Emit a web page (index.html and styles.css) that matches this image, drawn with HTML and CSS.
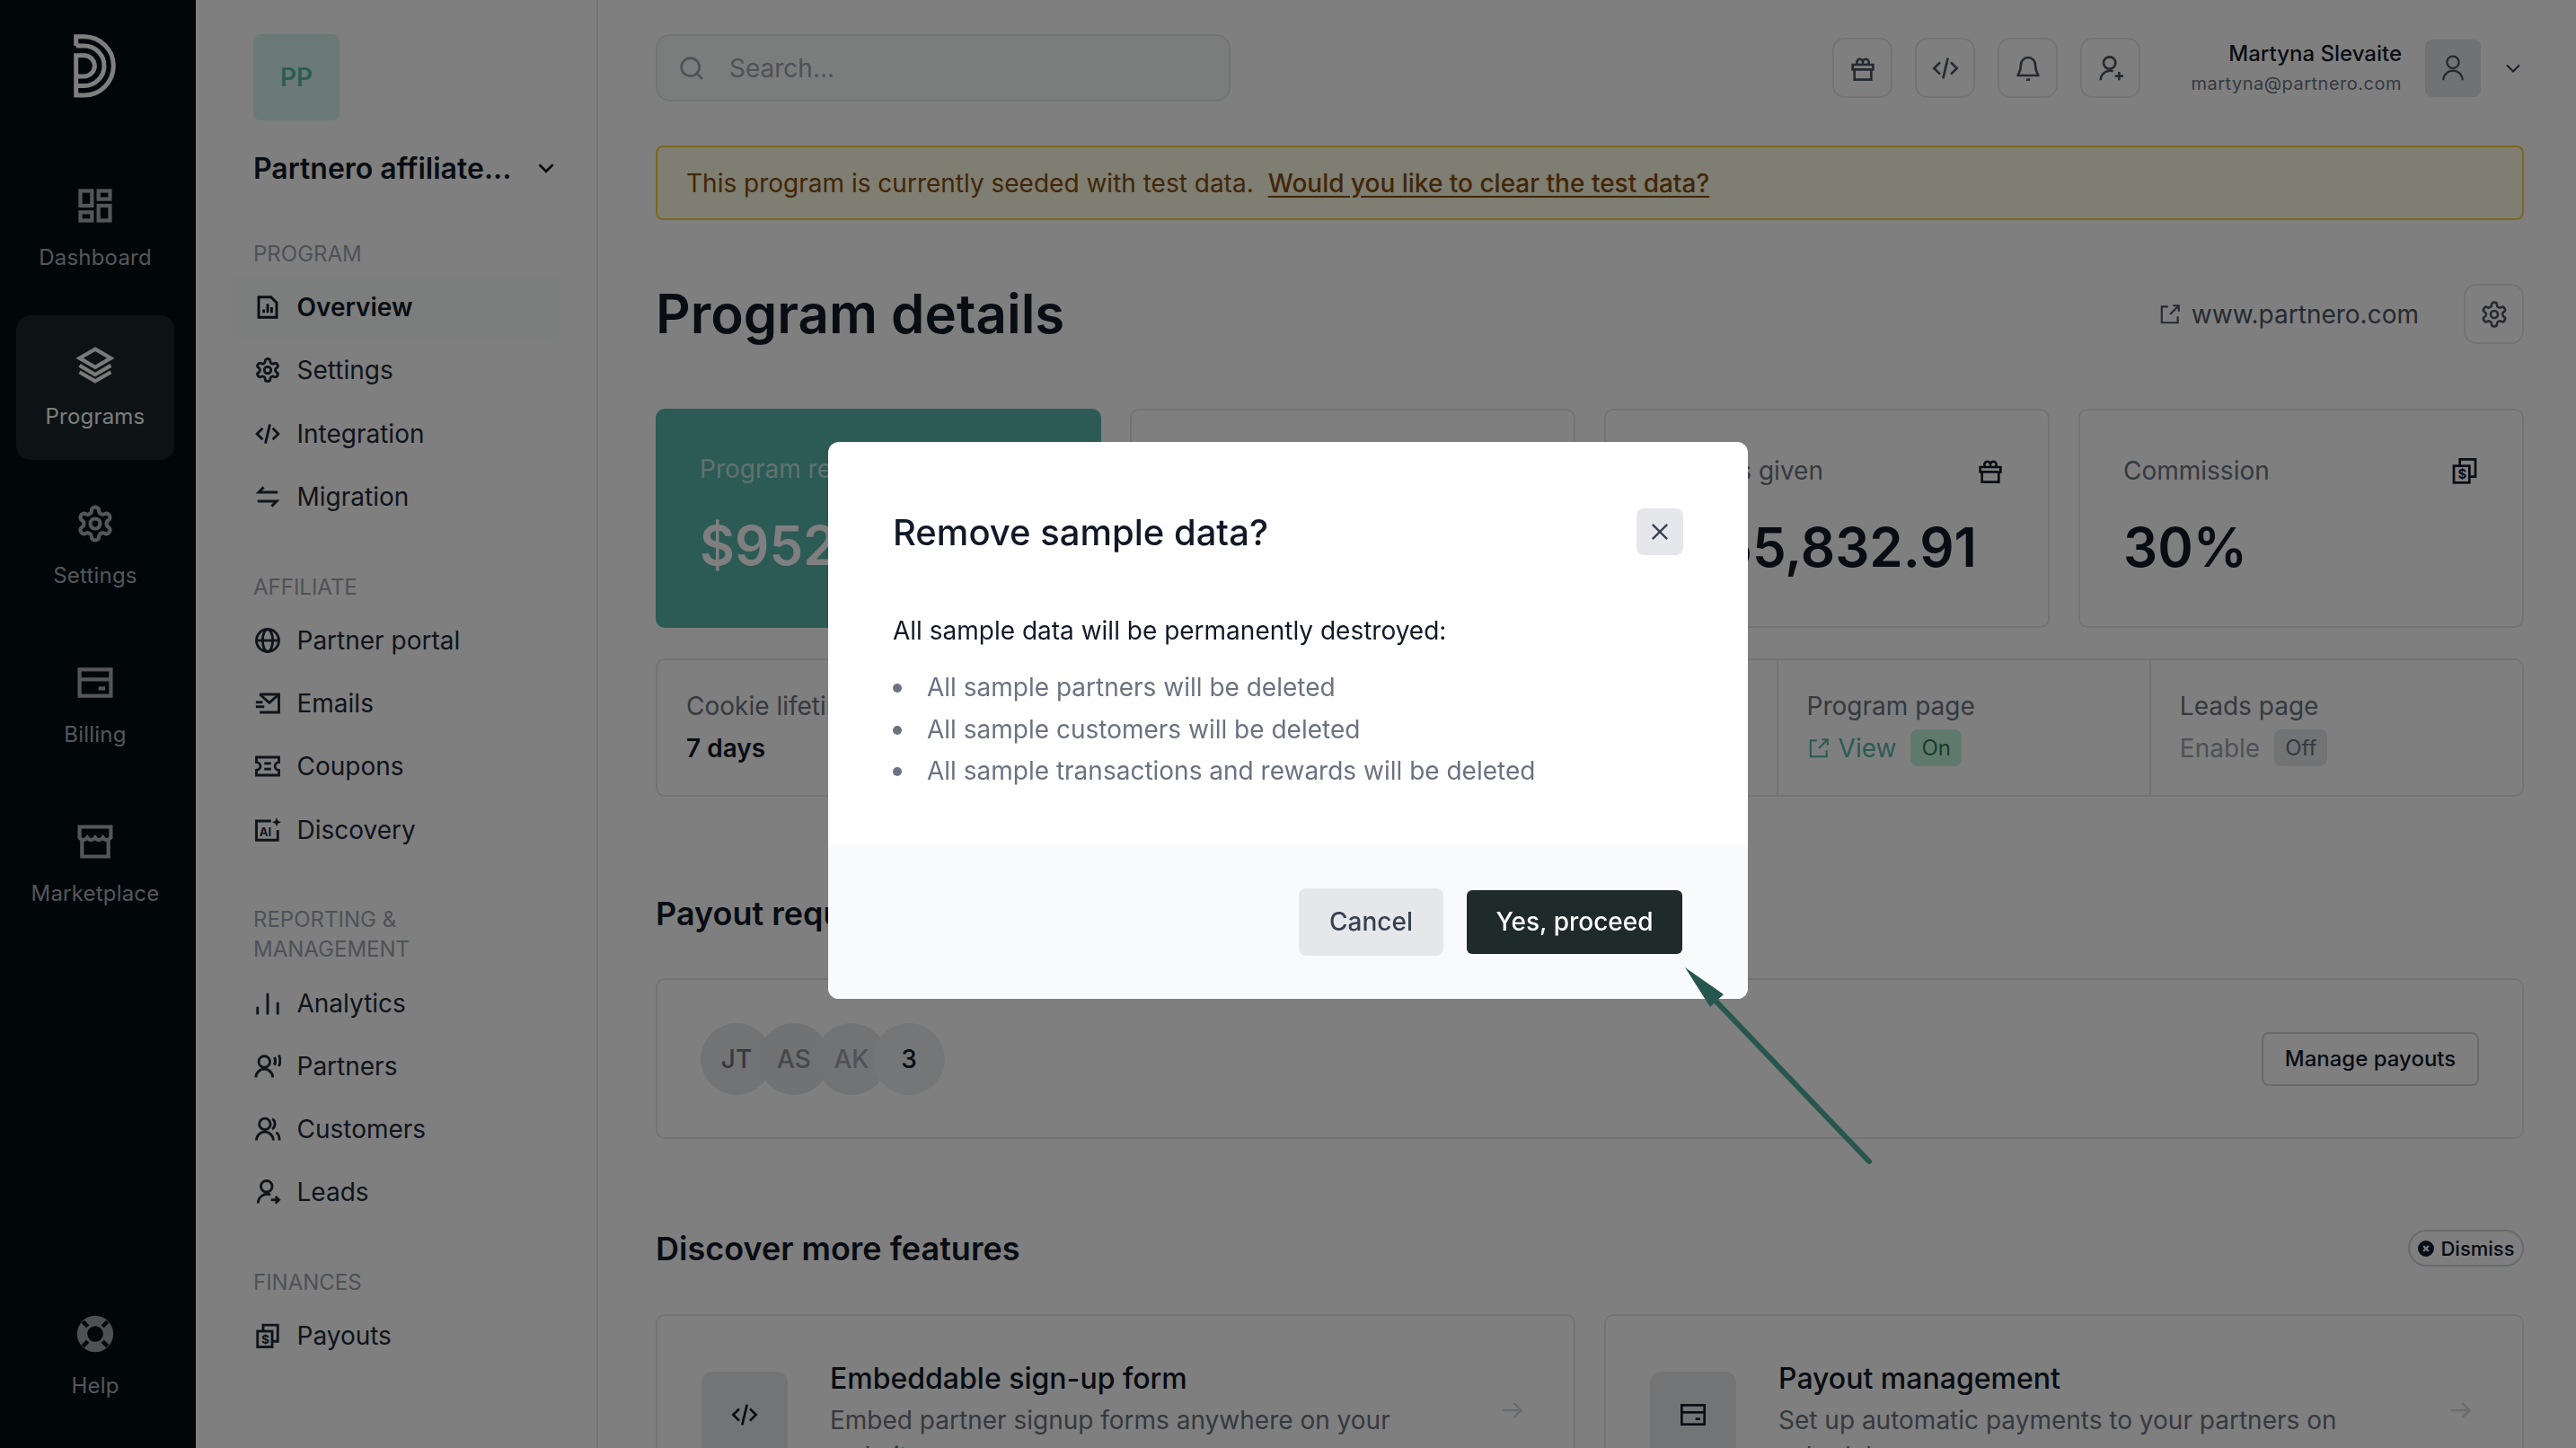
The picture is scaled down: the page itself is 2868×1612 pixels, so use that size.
FILE: index.html
```html
<!DOCTYPE html>
<html lang="en">
  <head>
    <meta charset="UTF-8" />
    <meta name="viewport" content="width=device-width, initial-scale=1.0" />
    <title>Program details</title>
    <link rel="stylesheet" href="styles.css">
  </head>
  <body>
    <svg class="sprite" xmlns="http://www.w3.org/2000/svg">
      <symbol id="i-dashboard" viewBox="0 0 24 24"><rect x="3" y="3" width="7" height="9"/><rect x="14" y="3" width="7" height="5"/><rect x="3" y="16" width="7" height="5"/><rect x="14" y="12" width="7" height="9"/></symbol>
      <symbol id="i-layers" viewBox="0 0 24 24"><path d="M12 2.5 21.5 8 12 13.5 2.5 8z"/><path d="m2.5 12.5 9.5 5.5 9.5-5.5"/><path d="m2.5 16.5 9.5 5.5 9.5-5.5"/></symbol>
      <symbol id="i-gear" viewBox="0 0 24 24"><path d="M12.22 2h-.44a2 2 0 0 0-2 2v.18a2 2 0 0 1-1 1.73l-.43.25a2 2 0 0 1-2 0l-.15-.08a2 2 0 0 0-2.73.73l-.22.38a2 2 0 0 0 .73 2.73l.15.1a2 2 0 0 1 1 1.72v.51a2 2 0 0 1-1 1.74l-.15.09a2 2 0 0 0-.73 2.73l.22.38a2 2 0 0 0 2.73.73l.15-.08a2 2 0 0 1 2 0l.43.25a2 2 0 0 1 1 1.73V20a2 2 0 0 0 2 2h.44a2 2 0 0 0 2-2v-.18a2 2 0 0 1 1-1.73l.43-.25a2 2 0 0 1 2 0l.15.08a2 2 0 0 0 2.73-.73l.22-.39a2 2 0 0 0-.73-2.73l-.15-.08a2 2 0 0 1-1-1.74v-.5a2 2 0 0 1 1-1.74l.15-.09a2 2 0 0 0 .73-2.73l-.22-.38a2 2 0 0 0-2.73-.73l-.15.08a2 2 0 0 1-2 0l-.43-.25a2 2 0 0 1-1-1.73V4a2 2 0 0 0-2-2z"/><circle cx="12" cy="12" r="3"/></symbol>
      <symbol id="i-code" viewBox="0 0 24 24"><path d="M7.5 7 2.5 12l5 5"/><path d="m16.5 7 5 5-5 5"/><path d="M14 3.5 10 20.5"/></symbol>
      <symbol id="i-card" viewBox="0 0 24 24"><rect x="2.5" y="4" width="19" height="16"/><path d="M2.5 10h19"/><path d="M14 15.5h4"/></symbol>
      <symbol id="i-store" viewBox="0 0 24 24"><path d="M2.5 3h19v6.5c-1.6 2-3.2 2-4.75 0-1.6 2-3.2 2-4.75 0-1.6 2-3.2 2-4.75 0-1.6 2-3.2 2-4.75 0z"/><path d="M4 11v10h16V11"/></symbol>
      <symbol id="i-report" viewBox="0 0 24 24"><path d="M4 3h11l5 5v13H4z"/><path d="M8.5 17v-3"/><path d="M12 17V9"/><path d="M15.5 17v-5"/></symbol>
      <symbol id="i-swap" viewBox="0 0 24 24"><path d="M21 8H4l4.5-4.5"/><path d="M3 16h17l-4.5 4.5"/></symbol>
      <symbol id="i-globe" viewBox="0 0 24 24"><circle cx="12" cy="12" r="10"/><path d="M2 12h20"/><ellipse cx="12" cy="12" rx="4.5" ry="10"/></symbol>
      <symbol id="i-mail" viewBox="0 0 24 24"><path d="M5 4h17v16H5"/><path d="m5 4 8.5 7.5L22 4"/><path d="M1.5 11h6"/><path d="M1.5 15h7.5"/></symbol>
      <symbol id="i-coupon" viewBox="0 0 24 24"><path d="M2 4h20v4.5a3.5 3.5 0 0 0 0 7V20H2v-4.5a3.5 3.5 0 0 0 0-7z"/><path d="M9 9.5h6"/><path d="M9 14.5h6"/></symbol>
      <symbol id="i-bars" viewBox="0 0 24 24"><path d="M3 22v-7"/><path d="M12 22V3"/><path d="M21 22v-11"/></symbol>
      <symbol id="i-partners" viewBox="0 0 24 24"><circle cx="9" cy="8" r="5"/><path d="M1.5 22a7.5 7.5 0 0 1 15 0"/><path d="M18 4c1 2 1 5 0 7"/><path d="M22 2c1.3 3 1.3 7 0 10"/></symbol>
      <symbol id="i-customers" viewBox="0 0 24 24"><circle cx="9.5" cy="7.5" r="5"/><path d="M2 22a7.5 7.5 0 0 1 15 0"/><path d="M16 3c3 1 3.500 7 0 9"/><path d="M19.5 15c2 1 3 4 3 7"/></symbol>
      <symbol id="i-leads" viewBox="0 0 24 24"><circle cx="11" cy="7" r="5"/><path d="M3.5 22a8 8 0 0 1 11-7.5"/><path d="M15 19h7"/><path d="m19 16 3 3-3 3"/></symbol>
      <symbol id="i-search" viewBox="0 0 24 24"><circle cx="11" cy="11" r="7.5"/><path d="m21 21-4.600-4.600"/></symbol>
      <symbol id="i-gift" viewBox="0 0 24 24"><path d="M3.5 9h17v4h-17z"/><path d="M5 13v8.500h14V13"/><path d="M8 9a2.6 2.6 0 1 1 4-3 2.6 2.6 0 1 1 4 3"/><path d="M12 6v3"/></symbol>
      <symbol id="i-bell" viewBox="0 0 24 24"><path d="M18 9a6 6 0 0 0-12 0c0 6-2.5 8-2.5 9h17c0-1-2.5-3-2.5-9z"/><path d="M10.5 21.5h3"/></symbol>
      <symbol id="i-user-plus" viewBox="0 0 24 24"><circle cx="11" cy="7.5" r="5"/><path d="M3.5 22a8 8 0 0 1 10.5-7.5"/><path d="M19 15v7"/><path d="M15.5 18.5h7"/></symbol>
      <symbol id="i-user" viewBox="0 0 24 24"><circle cx="12" cy="7" r="5"/><path d="M4 22a8 8 0 0 1 16 0"/></symbol>
      <symbol id="i-chevron" viewBox="0 0 24 24"><path d="m5 8.5 7 7 7-7"/></symbol>
      <symbol id="i-external" viewBox="0 0 24 24"><path d="M10 4H3.5v16.500H20V14"/><path d="m12 12 9-9"/><path d="M15 3h6v6"/></symbol>
      <symbol id="i-close" viewBox="0 0 24 24"><path d="m5 5 14 14"/><path d="M19 5 5 19"/></symbol>
      <symbol id="i-arrow" viewBox="0 0 24 24"><path d="M3 12h18"/><path d="m14 5 7 7-7 7"/></symbol>
    </svg>

    <div class="app">
      <nav class="rail">
        <svg class="rail-logo" viewBox="0 0 48 71" fill="none" stroke="currentColor" stroke-width="5">
          <path d="M2.7 13H11.7A22.3 22.3 0 0 1 11.7 57.6H2.7"/>
          <path d="M2.7 13V2.7H11.7A32.65 32.65 0 0 1 11.7 68H2.7V23.7H11.7A11.65 11.65 0 0 1 11.7 47H2.7"/>
        </svg>
        <div class="rail-items">
          <a class="rail-item"><svg class="icon rail-icon"><use href="#i-dashboard"/></svg>Dashboard</a>
          <a class="rail-item active"><svg class="icon rail-icon"><use href="#i-layers"/></svg>Programs</a>
          <a class="rail-item"><svg class="icon rail-icon"><use href="#i-gear"/></svg>Settings</a>
          <a class="rail-item"><svg class="icon rail-icon"><use href="#i-card"/></svg>Billing</a>
          <a class="rail-item"><svg class="icon rail-icon"><use href="#i-store"/></svg>Marketplace</a>
        </div>
        <a class="rail-item rail-help">
          <svg class="rail-icon" viewBox="0 0 24 24">
            <circle class="help-ring" cx="12" cy="12" r="11"/>
            <circle class="help-hole" cx="12" cy="12" r="4.8"/>
            <path class="help-cut" d="M4.5 4.5l3 3M19.5 4.5l-3 3M4.5 19.5l3-3M19.5 19.5l-3-3"/>
          </svg>
          Help
        </a>
      </nav>

      <aside class="sidebar">
        <div class="program-badge">PP</div>
        <div class="program-switch">
          <span>Partnero affiliate...</span>
          <svg class="icon chevron-sm"><use href="#i-chevron"/></svg>
        </div>

        <h4 class="side-title">PROGRAM</h4>
        <a class="side-row current"><svg class="icon"><use href="#i-report"/></svg>Overview</a>
        <a class="side-row"><svg class="icon"><use href="#i-gear"/></svg>Settings</a>
        <a class="side-row"><svg class="icon"><use href="#i-code"/></svg>Integration</a>
        <a class="side-row"><svg class="icon"><use href="#i-swap"/></svg>Migration</a>

        <h4 class="side-title">AFFILIATE</h4>
        <a class="side-row"><svg class="icon"><use href="#i-globe"/></svg>Partner portal</a>
        <a class="side-row"><svg class="icon"><use href="#i-mail"/></svg>Emails</a>
        <a class="side-row"><svg class="icon"><use href="#i-coupon"/></svg>Coupons</a>
        <a class="side-row">
          <svg class="icon" viewBox="0 0 24 24"><path d="M21 12v9H2V4h13"/><text x="4.5" y="17.5" class="icon-text ai">AI</text><path class="icon-solid" d="m20 1 1.200 2.800L24 5l-2.800 1.200L20 9l-1.200-2.800L16 5l2.800-1.200z"/></svg>
          Discovery
        </a>

        <h4 class="side-title">REPORTING &amp; MANAGEMENT</h4>
        <a class="side-row"><svg class="icon"><use href="#i-bars"/></svg>Analytics</a>
        <a class="side-row"><svg class="icon"><use href="#i-partners"/></svg>Partners</a>
        <a class="side-row"><svg class="icon"><use href="#i-customers"/></svg>Customers</a>
        <a class="side-row"><svg class="icon"><use href="#i-leads"/></svg>Leads</a>

        <h4 class="side-title">FINANCES</h4>
        <a class="side-row">
          <svg class="icon" viewBox="0 0 24 24"><rect x="3" y="8" width="13" height="14"/><path d="M8 8V2.5h13V17h-5"/><text x="6.4" y="19" class="icon-text">$</text></svg>
          Payouts
        </a>
      </aside>

      <main class="content">
        <header class="topbar">
          <div class="search">
            <svg class="icon"><use href="#i-search"/></svg>
            <span>Search...</span>
          </div>
          <div class="top-actions">
            <button class="icon-btn"><svg class="icon"><use href="#i-gift"/></svg></button>
            <button class="icon-btn"><svg class="icon"><use href="#i-code"/></svg></button>
            <button class="icon-btn"><svg class="icon"><use href="#i-bell"/></svg></button>
            <button class="icon-btn"><svg class="icon"><use href="#i-user-plus"/></svg></button>
          </div>
          <div class="user">
            <div class="user-text">
              <div class="user-name">Martyna Slevaite</div>
              <div class="user-mail">martyna@partnero.com</div>
            </div>
            <div class="user-avatar"><svg class="icon"><use href="#i-user"/></svg></div>
            <svg class="icon chevron-xs"><use href="#i-chevron"/></svg>
          </div>
        </header>

        <div class="notice">
          This program is currently seeded with test data.
          <a class="notice-link">Would you like to clear the test data?</a>
        </div>

        <div class="page-head">
          <h1>Program details</h1>
          <a class="site-link"><svg class="icon"><use href="#i-external"/></svg>www.partnero.com</a>
          <button class="icon-btn"><svg class="icon"><use href="#i-gear"/></svg></button>
        </div>

        <section class="cards">
          <div class="card teal">
            <div class="card-head"><span>Program revenue</span></div>
            <div class="card-value">$952</div>
          </div>
          <div class="card"></div>
          <div class="card">
            <div class="card-head"><span>Rewards given</span><svg class="icon dark"><use href="#i-gift"/></svg></div>
            <div class="card-value">$355,832.91</div>
          </div>
          <div class="card">
            <div class="card-head">
              <span>Commission</span>
              <svg class="icon dark" viewBox="0 0 24 24"><rect x="3" y="8" width="13" height="14"/><path d="M8 8V2.5h13V17h-5"/><text x="6.4" y="19" class="icon-text">$</text></svg>
            </div>
            <div class="card-value">30%</div>
          </div>
        </section>

        <section class="stats">
          <div class="stat">
            <div class="stat-label">Cookie lifetime</div>
            <div class="stat-line strong">7 days</div>
          </div>
          <div class="stat"></div>
          <div class="stat"></div>
          <div class="stat">
            <div class="stat-label">Program page</div>
            <div class="stat-line">
              <a class="stat-link"><svg class="icon"><use href="#i-external"/></svg>View</a>
              <span class="pill on">On</span>
            </div>
          </div>
          <div class="stat">
            <div class="stat-label">Leads page</div>
            <div class="stat-line">
              <a class="stat-muted">Enable</a>
              <span class="pill off">Off</span>
            </div>
          </div>
        </section>

        <h2 class="section-title payout-title">Payout requests</h2>
        <section class="payouts">
          <div class="avatars">
            <span class="avatar one">JT</span>
            <span class="avatar two">AS</span>
            <span class="avatar three">AK</span>
            <span class="avatar more">3</span>
          </div>
          <button class="outline-btn">Manage payouts</button>
        </section>

        <div class="discover-head">
          <h2 class="section-title">Discover more features</h2>
          <button class="dismiss">
            <svg class="dismiss-icon" viewBox="0 0 24 24"><circle cx="12" cy="12" r="12"/><path d="m8.5 8.5 7 7M15.5 8.5l-7 7"/></svg>
            Dismiss
          </button>
        </div>

        <section class="features">
          <div class="feature">
            <div class="feature-icon"><svg class="icon"><use href="#i-code"/></svg></div>
            <div class="feature-text">
              <h3>Embeddable sign-up form</h3>
              <p>Embed partner signup forms anywhere on your website</p>
            </div>
            <svg class="icon feature-arrow"><use href="#i-arrow"/></svg>
          </div>
          <div class="feature">
            <div class="feature-icon"><svg class="icon"><use href="#i-card"/></svg></div>
            <div class="feature-text">
              <h3>Payout management</h3>
              <p>Set up automatic payments to your partners on schedule</p>
            </div>
            <svg class="icon feature-arrow"><use href="#i-arrow"/></svg>
          </div>
        </section>
      </main>
    </div>

    <div class="overlay">
      <div class="modal">
        <div class="modal-body">
          <div class="modal-head">
            <h2>Remove sample data?</h2>
            <button class="modal-close"><svg class="icon"><use href="#i-close"/></svg></button>
          </div>
          <p class="modal-lead">All sample data will be permanently destroyed:</p>
          <ul class="modal-list">
            <li>All sample partners will be deleted</li>
            <li>All sample customers will be deleted</li>
            <li>All sample transactions and rewards will be deleted</li>
          </ul>
        </div>
        <div class="modal-foot">
          <button class="btn-cancel">Cancel</button>
          <button class="btn-proceed">Yes, proceed</button>
        </div>
      </div>
    </div>

    <svg class="pointer" viewBox="0 0 2868 1612">
      <path class="pointer-line" d="M2081 1293 1908 1112"/>
      <path class="pointer-head" d="M1876 1077 1919 1107 1904 1121z"/>
    </svg>
  </body>
</html>
```

FILE: styles.css
```css
html {
  height: 100%;
}

body {
  height: 100%;
  margin: 0;
  overflow: hidden;
  font-family: Inter, "Noto Sans", sans-serif;
  font-size: 28px;
  color: #111827;
  background-color: #ffffff;
}

h1,
h2,
h3,
h4,
p,
ul {
  margin: 0;
  padding: 0;
}

button {
  font-family: inherit;
  padding: 0;
  border: none;
  background: none;
}

.sprite {
  position: absolute;
  width: 0;
  height: 0;
}

.icon {
  display: block;
  flex: none;
  width: 32px;
  height: 32px;
  fill: none;
  stroke: currentColor;
  stroke-width: 2;
}

.icon-text {
  fill: currentColor;
  stroke: none;
  font-size: 11px;
  font-weight: 700;
}

.icon-text.ai {
  font-size: 10.5px;
}

.icon-solid {
  fill: currentColor;
  stroke: none;
}

.app {
  display: flex;
  height: 100%;
}

/* left rail */
.rail {
  flex: none;
  width: 218px;
  height: 100%;
  box-sizing: border-box;
  padding: 38px 24px 21px 18px;
  display: flex;
  flex-direction: column;
  background-color: #020d11;
}

.rail-logo {
  display: block;
  width: 48px;
  height: 71px;
  margin: 0 auto;
  color: #ffffff;
}

.rail-items {
  display: flex;
  flex-direction: column;
  gap: 16px;
  margin-top: 65px;
}

.rail-item {
  height: 161px;
  box-sizing: border-box;
  padding-top: 33px;
  border-radius: 16px;
  display: flex;
  flex-direction: column;
  align-items: center;
  gap: 20px;
  font-size: 24px;
  line-height: 32px;
  letter-spacing: 0.2px;
  color: #a9adb2;
}

.rail-item.active {
  background-color: #1b2628;
  color: #fafafa;
}

.rail-icon {
  width: 44px;
  height: 44px;
  stroke-width: 2.3;
}

.rail-item.active .rail-icon {
  color: #f5f5f5;
}

.rail-help {
  margin-top: auto;
}

.help-ring {
  fill: #9aa2a5;
}

.help-hole {
  fill: #020d11;
}

.help-cut {
  fill: none;
  stroke: #020d11;
  stroke-width: 2.5;
}

/* program sidebar */
.sidebar {
  flex: none;
  width: 448px;
  height: 100%;
  box-sizing: border-box;
  padding: 38px 40px 0 64px;
  border-right: 2px solid #e5e7eb;
}

.program-badge {
  width: 96px;
  height: 96px;
  display: flex;
  align-items: center;
  justify-content: center;
  border-radius: 8px;
  background-color: #d6f5ec;
  color: #54bca8;
  font-size: 28px;
  font-weight: 600;
}

.program-switch {
  display: flex;
  align-items: center;
  justify-content: space-between;
  margin-top: 33px;
  height: 40px;
  font-size: 32px;
  font-weight: 600;
}

.chevron-sm {
  width: 26px;
  height: 26px;
  margin-right: 3px;
  stroke-width: 2.4;
}

.side-title {
  margin: 48.5px 0 8px;
  font-size: 24px;
  line-height: 33px;
  font-weight: 400;
  color: #9ca3af;
  width: 240px;
}

.program-switch + .side-title {
  margin-top: 59px;
}

.side-row {
  height: 70.3px;
  margin-left: -24px;
  padding-left: 25px;
  box-sizing: border-box;
  display: flex;
  align-items: center;
  gap: 17.5px;
  border-radius: 12px;
  font-size: 28px;
  color: #1f2937;
}

.side-row .icon {
  width: 30px;
  height: 30px;
  stroke-width: 2.3;
}

.side-row.current {
  background-color: #f8fbfa;
  font-weight: 600;
  color: #111827;
}

/* main column */
.content {
  flex: 1;
  min-width: 0;
  padding: 38px 58px 0 64px;
  overflow: hidden;
}

.topbar {
  display: flex;
  align-items: center;
  height: 75px;
}

.search {
  width: 640px;
  height: 75px;
  box-sizing: border-box;
  padding-left: 22px;
  display: flex;
  align-items: center;
  gap: 26px;
  border: 2px solid #e5e7eb;
  border-radius: 16px;
  background-color: #f6fafa;
  color: #9ca3af;
}

.top-actions {
  display: flex;
  gap: 25px;
  margin-left: auto;
}

.icon-btn {
  width: 67px;
  height: 67px;
  display: flex;
  align-items: center;
  justify-content: center;
  border: 2px solid #e5e7eb;
  border-radius: 14px;
  box-sizing: border-box;
  color: #4b5563;
}

.user {
  display: flex;
  align-items: center;
  margin-left: 56px;
}

.user-text {
  text-align: right;
}

.user-name {
  font-size: 24px;
  line-height: 32px;
  font-weight: 500;
}

.user-mail {
  margin-top: 2px;
  font-size: 20px;
  line-height: 30px;
  letter-spacing: 0.5px;
  color: #6b7280;
}

.user-avatar {
  width: 62px;
  height: 64px;
  margin-left: 26px;
  display: flex;
  align-items: center;
  justify-content: center;
  border-radius: 8px;
  background-color: #e3e5e8;
  color: #4b5563;
}

.user-avatar .icon {
  stroke-width: 1.7;
}

.chevron-xs {
  width: 24px;
  height: 24px;
  margin-left: 24px;
  color: #374151;
}

.notice {
  height: 83px;
  box-sizing: border-box;
  margin-top: 49px;
  padding-left: 32px;
  display: flex;
  align-items: center;
  gap: 16px;
  border: 2px solid #facc40;
  border-radius: 8px;
  background-color: #fdfce4;
  color: #854d0e;
}

.notice-link {
  text-decoration: underline;
  text-underline-offset: 4px;
  font-weight: 500;
  color: #854d0e;
}

.page-head {
  display: flex;
  align-items: center;
  height: 67px;
  margin-top: 71px;
}

h1 {
  flex: 1;
  font-size: 60px;
  line-height: 67px;
  font-weight: 600;
}

.site-link {
  display: flex;
  align-items: center;
  gap: 11px;
  margin-right: 50px;
  font-size: 28px;
  color: #4b5563;
}

.site-link .icon {
  width: 26px;
  height: 26px;
}

.cards {
  display: grid;
  grid-template-columns: repeat(4, 1fr);
  gap: 32px;
  margin-top: 72px;
}

.card {
  height: 244px;
  box-sizing: border-box;
  padding: 47px 48px 0;
  border: 2px solid #e5e7eb;
  border-radius: 10px;
}

.card.teal {
  border: none;
  padding-left: 49px;
  background-color: #58b5a8;
  color: #ffffff;
}

.card-head {
  display: flex;
  align-items: center;
  justify-content: space-between;
  height: 40px;
  color: #6b7280;
}

.teal .card-head {
  color: #c2e4de;
}

.dark {
  color: #111827;
}

.card-value {
  margin-top: 29px;
  font-size: 60px;
  line-height: 72px;
  font-weight: 600;
  white-space: nowrap;
}

.stats {
  display: grid;
  grid-template-columns: repeat(5, 1fr);
  height: 154px;
  box-sizing: border-box;
  margin-top: 34px;
  border: 2px solid #e5e7eb;
  border-radius: 10px;
}

.stat {
  padding: 31px 0 0 32px;
}

.stat + .stat {
  border-left: 2px solid #e5e7eb;
}

.stat-label {
  line-height: 40px;
  color: #6b7280;
}

.stat-line {
  display: flex;
  align-items: center;
  gap: 16px;
  height: 41px;
  margin-top: 6px;
}

.strong {
  font-weight: 600;
}

.stat-link {
  display: flex;
  align-items: center;
  gap: 9px;
  color: #58b5a8;
}

.stat-link .icon {
  width: 26px;
  height: 26px;
}

.stat-muted {
  color: #9ca3af;
}

.pill {
  height: 41px;
  padding: 0 12px;
  display: flex;
  align-items: center;
  border-radius: 8px;
  font-size: 24px;
}

.pill.on {
  background-color: #bff5d8;
  color: #2f7d55;
}

.pill.off {
  background-color: #e5e7eb;
  color: #6b7280;
}

.section-title {
  font-size: 36px;
  line-height: 44px;
  font-weight: 600;
}

.payout-title {
  margin-top: 108px;
}

.payouts {
  height: 179px;
  box-sizing: border-box;
  margin-top: 50px;
  padding: 0 48px;
  display: flex;
  align-items: center;
  justify-content: space-between;
  border: 2px solid #e5e7eb;
  border-radius: 10px;
}

.avatars {
  display: flex;
}

.avatar {
  width: 80px;
  height: 80px;
  margin-right: -16px;
  display: flex;
  align-items: center;
  justify-content: center;
  border-radius: 50%;
  background-color: #e5e7eb;
  font-weight: 500;
  color: #6b7280;
}

.avatar.two {
  background-color: #e3e5e9;
  color: #8d9097;
}

.avatar.three {
  color: #a0a3aa;
}

.avatar.more {
  background-color: #eaecef;
  color: #111827;
}

.outline-btn {
  width: 242px;
  height: 60px;
  border: 2px solid #d1d5db;
  border-radius: 8px;
  font-size: 24px;
  font-weight: 500;
  color: #111827;
}

.discover-head {
  display: flex;
  align-items: center;
  justify-content: space-between;
  height: 41px;
  margin-top: 101px;
}

.dismiss {
  height: 41px;
  width: 129px;
  display: flex;
  align-items: center;
  justify-content: center;
  gap: 6px;
  border: 2px solid #d1d5db;
  border-radius: 21px;
  font-size: 22px;
  font-weight: 500;
  color: #111827;
}

.dismiss-icon {
  width: 20px;
  height: 20px;
  fill: #111827;
  stroke: #ffffff;
  stroke-width: 2.5;
}

.features {
  display: grid;
  grid-template-columns: 1fr 1fr;
  gap: 32px;
  margin-top: 53px;
}

.feature {
  height: 300px;
  box-sizing: border-box;
  padding: 50px 55px 0 49px;
  display: flex;
  gap: 47px;
  border: 2px solid #e5e7eb;
  border-radius: 10px;
}

.feature-icon {
  flex: none;
  width: 96px;
  height: 96px;
  margin-top: 12px;
  display: flex;
  align-items: center;
  justify-content: center;
  border-radius: 12px;
  background-color: #e7e9ed;
  color: #111827;
}

.feature-text {
  flex: 1;
  min-width: 0;
}

.feature-text h3 {
  font-size: 32px;
  line-height: 40px;
  font-weight: 500;
}

.feature-text p {
  margin-top: 6px;
  line-height: 40px;
  color: #6b7280;
}

.feature-arrow {
  align-self: flex-start;
  margin-top: 41px;
  width: 28px;
  height: 28px;
  color: #d1d5db;
}

/* dialog on top of the dimmed page */
.overlay {
  position: fixed;
  inset: 0;
  padding-bottom: 8px;
  box-sizing: border-box;
  display: flex;
  align-items: center;
  justify-content: center;
  background-color: rgba(0, 0, 0, 0.5);
}

.modal {
  width: 1024px;
  height: 620px;
  overflow: hidden;
  display: flex;
  flex-direction: column;
  border-radius: 12px;
  background-color: #ffffff;
}

.modal-body {
  flex: 1;
  padding: 74px 72px 0;
}

.modal-head {
  display: flex;
  align-items: center;
  justify-content: space-between;
  height: 52px;
}

.modal-head h2 {
  font-size: 40px;
  font-weight: 500;
}

.modal-close {
  width: 52px;
  height: 52px;
  display: flex;
  align-items: center;
  justify-content: center;
  border-radius: 8px;
  background-color: #e5e7eb;
  color: #374151;
}

.modal-close .icon {
  width: 28px;
  height: 28px;
}

.modal-lead {
  margin-top: 64px;
  line-height: 40px;
}

.modal-list {
  margin-top: 20px;
  list-style: none;
  color: #6b7280;
}

.modal-list li {
  position: relative;
  padding-left: 38px;
  line-height: 46.5px;
}

.modal-list li::before {
  content: "";
  position: absolute;
  left: 0;
  top: 19px;
  width: 10px;
  height: 10px;
  border-radius: 50%;
  background-color: #6b7280;
}

.modal-foot {
  flex: none;
  height: 172px;
  box-sizing: border-box;
  padding-right: 73px;
  display: flex;
  align-items: center;
  justify-content: flex-end;
  gap: 26px;
  background-color: #f9fafb;
}

.btn-cancel {
  width: 161px;
  height: 75px;
  border-radius: 8px;
  background-color: #e5e7eb;
  font-size: 28px;
  font-weight: 500;
  color: #374151;
}

.btn-proceed {
  width: 240px;
  height: 71px;
  border-radius: 6px;
  background-color: #1f2a2a;
  box-shadow: 0 0 0 2px #ffffff;
  font-size: 28px;
  font-weight: 500;
  color: #ffffff;
}

.pointer {
  position: fixed;
  inset: 0;
  width: 100%;
  height: 100%;
  pointer-events: none;
}

.pointer-line {
  fill: none;
  stroke: #27564f;
  stroke-width: 6;
  stroke-linecap: round;
}

.pointer-head {
  fill: #27564f;
}
```
